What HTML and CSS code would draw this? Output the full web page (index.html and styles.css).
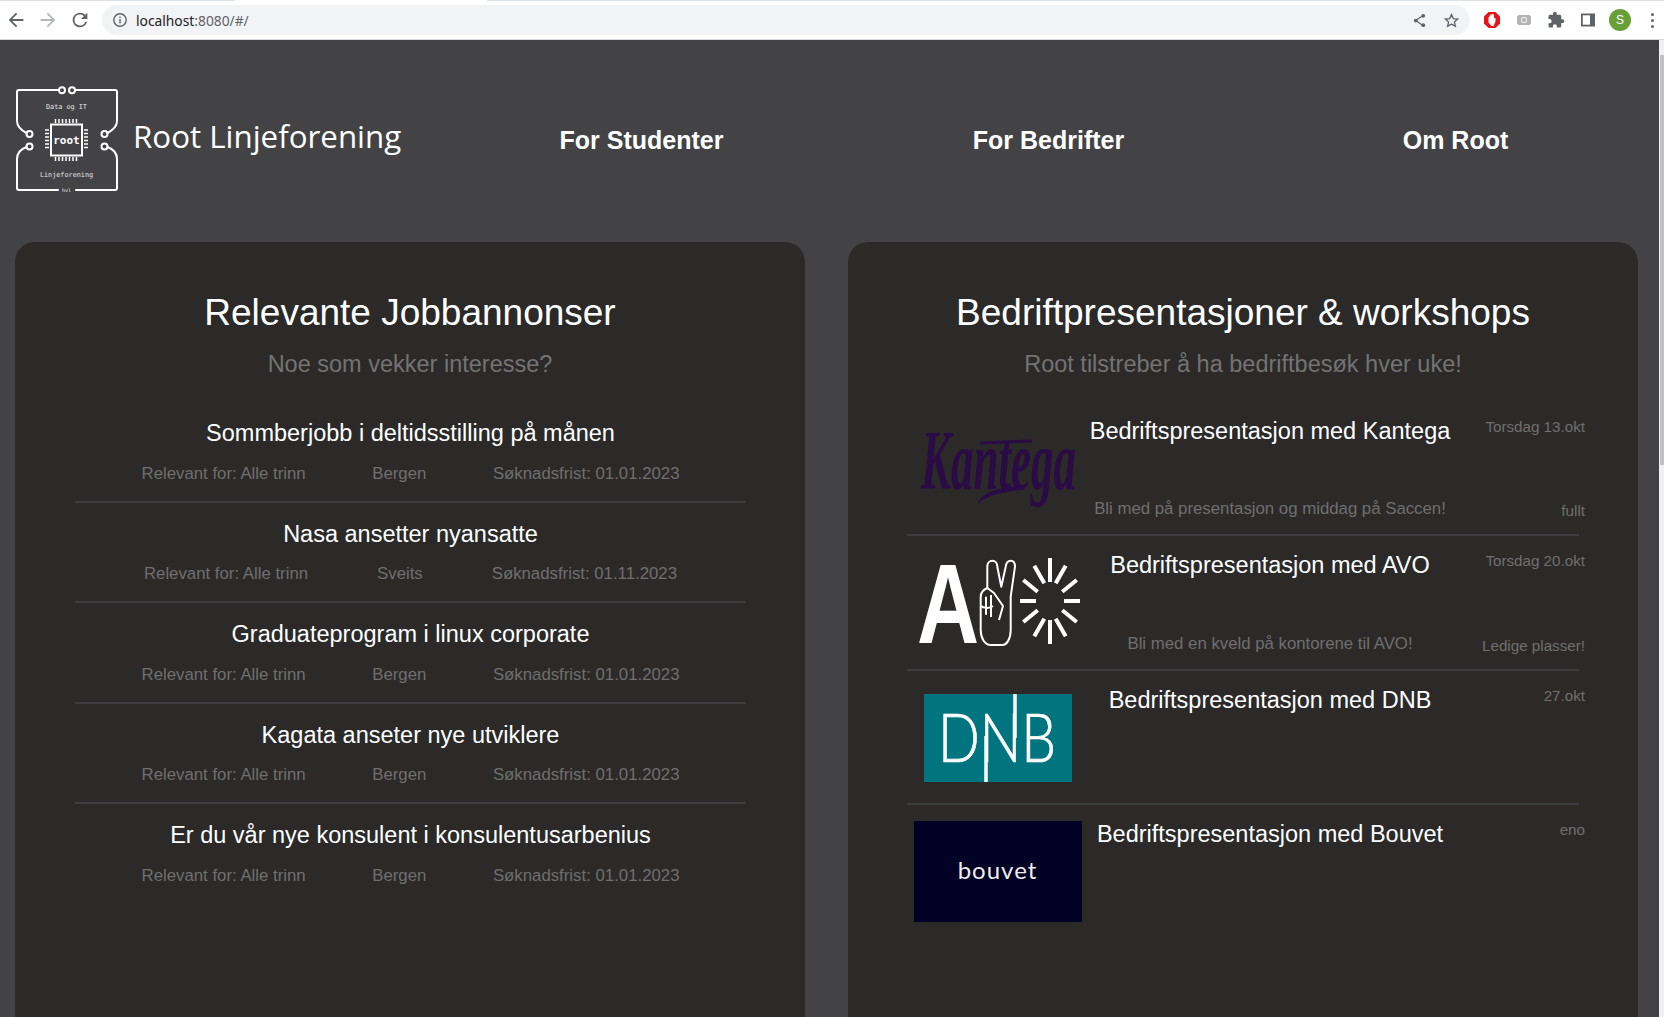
FILE: index.html
```html
<html>
<head>
  <title>Root Linjeforening</title>
  <link rel="stylesheet" href="styles.css">
</head>
<body>
  <div class="browser-bar">
    <div class="tab-strip"><div class="tab-gap"></div></div>
    <div class="toolbar">
      <svg class="tool-icon" viewBox="0 0 24 24"><path d="M20 11H7.8l5.6-5.6L12 4l-8 8 8 8 1.4-1.4L7.8 13H20z" fill="#5f6368"/></svg>
      <svg class="tool-icon" viewBox="0 0 24 24"><path d="M4 11h12.2l-5.6-5.6L12 4l8 8-8 8-1.4-1.4 5.6-5.6H4z" fill="#b4b6b9"/></svg>
      <svg class="tool-icon" viewBox="0 0 24 24"><path d="M17.65 6.35A8 8 0 1 0 19.73 14h-2.08A6 6 0 1 1 12 6c1.66 0 3.14.69 4.22 1.78L13 11h7V4z" fill="#5f6368"/></svg>
      <div class="url-pill">
        <svg class="info-icon" viewBox="0 0 16 16"><circle cx="8" cy="8" r="6.2" fill="none" stroke="#5f6368" stroke-width="1.4"/><rect x="7.3" y="7" width="1.4" height="4.4" fill="#5f6368"/><rect x="7.3" y="4.6" width="1.4" height="1.4" fill="#5f6368"/></svg>
        <span class="url-host">localhost</span><span class="url-rest">:8080/#/</span>
        <svg class="pill-icon share" viewBox="0 0 16 16"><path d="M12 2.5 4 8l8 5.5" fill="none" stroke="#5f6368" stroke-width="1.3"/><circle cx="12" cy="3" r="2" fill="#5f6368"/><circle cx="4" cy="8" r="2" fill="#5f6368"/><circle cx="12" cy="13" r="2" fill="#5f6368"/></svg>
        <svg class="pill-icon" viewBox="0 0 16 16"><path d="M8 1.6l1.9 4.3 4.7.5-3.5 3.1 1 4.6L8 11.8l-4.1 2.3 1-4.6L1.4 6.4l4.7-.5z" fill="none" stroke="#5f6368" stroke-width="1.4"/></svg>
      </div>
      <div class="ext-icons">
        <svg class="ext-icon" viewBox="0 0 18 18"><path d="M5.5 1h7L17 5.5v7L12.500 17h-7L1 12.500v-7z" fill="#e8131b"/><path d="M5.500 9V6h1V4.500h1V3.500h1V3h1.500v.5h1V7h1.500v3.500L10.500 15h-2L5.500 11.500z" fill="#fff"/></svg>
        <svg class="ext-icon" viewBox="0 0 18 18"><rect x="2" y="4" width="14" height="10" rx="2" fill="#b3b3b3"/><circle cx="9" cy="9" r="2.600" fill="none" stroke="#e8e8e8" stroke-width="1.200"/></svg>
        <svg class="ext-icon" viewBox="0 0 24 24"><path d="M20.500 11H19V7a2 2 0 0 0-2-2h-4V3.500a2.500 2.500 0 0 0-5 0V5H4a2 2 0 0 0-2 2v3.800h1.500a2.700 2.700 0 0 1 0 5.400H2V20a2 2 0 0 0 2 2h3.800v-1.500a2.700 2.700 0 0 1 5.400 0V22H17a2 2 0 0 0 2-2v-4h1.500a2.500 2.500 0 0 0 0-5z" fill="#5f6368"/></svg>
        <svg class="ext-icon" viewBox="0 0 18 18"><path d="M2 2.500h14v13H2z" fill="#5f6368"/><rect x="3.800" y="4.300" width="7.200" height="9.400" fill="#fff"/></svg>
        <div class="avatar">S</div>
        <div class="kebab"><i></i><i></i><i></i></div>
      </div>
    </div>
  </div>

  <div class="viewport">
    <div class="page">
      <header class="site-header">
        <div class="brand">
          <svg class="brand-logo" viewBox="0 0 102 102">
            <g fill="none" stroke="#fff" stroke-width="2" stroke-linecap="round">
              <path d="M43 1H3a2 2 0 0 0-2 2v29c0 6 4 9 9.500 12"/>
              <path d="M59 1h40a2 2 0 0 1 2 2v29c0 6-4 9-9.500 12"/>
              <path d="M10.500 58C5 60 1 63 1 70v29a2 2 0 0 0 2 2h39"/>
              <path d="M91.500 58c5.500 2 9.500 5 9.500 12v29a2 2 0 0 1-2 2H60"/>
              <circle cx="46" cy="1.200" r="3"/>
              <circle cx="56" cy="1.200" r="3"/>
              <circle cx="13.500" cy="45" r="3"/>
              <circle cx="88.500" cy="45" r="3"/>
              <circle cx="13.500" cy="57.500" r="3"/>
              <circle cx="88.500" cy="57.500" r="3"/>
              <rect x="35" y="35.500" width="31" height="31"/>
              <path d="M39.500 30v4M43 30v4M46.500 30v4M50 30v4M53.500 30v4M57 30v4M60.500 30v4M39.500 68v4M43 68v4M46.500 68v4M50 68v4M53.500 68v4M57 68v4M60.500 68v4M29 41h4M29 44.500h4M29 48h4M29 51.500h4M29 55h4M29 58.500h4M68 41h4M68 44.500h4M68 48h4M68 51.500h4M68 55h4M68 58.500h4" stroke-width="1.500" stroke-linecap="butt"/>
            </g>
            <text class="logo-chip" x="50.500" y="55" text-anchor="middle">root</text>
            <text class="logo-small" x="50.500" y="20" text-anchor="middle">Data og IT</text>
            <text class="logo-small" x="50.500" y="88" text-anchor="middle">Linjeforening</text>
            <text class="logo-tiny" x="50.500" y="103" text-anchor="middle">hvl</text>
          </svg>
          <span class="brand-name">Root Linjeforening</span>
        </div>
        <nav class="main-nav">
          <a href="#">For Studenter</a>
          <a href="#">For Bedrifter</a>
          <a href="#">Om Root</a>
        </nav>
      </header>

      <main class="panels">
        <section class="panel">
          <h2>Relevante Jobbannonser</h2>
          <p class="panel-sub">Noe som vekker interesse?</p>
          <div class="job-list">
            <div class="job">
              <h3>Sommberjobb i deltidsstilling på månen</h3>
              <div class="job-meta"><span>Relevant for: Alle trinn</span><span>Bergen</span><span>Søknadsfrist: 01.01.2023</span></div>
            </div>
            <div class="job">
              <h3>Nasa ansetter nyansatte</h3>
              <div class="job-meta"><span>Relevant for: Alle trinn</span><span>Sveits</span><span>Søknadsfrist: 01.11.2023</span></div>
            </div>
            <div class="job">
              <h3>Graduateprogram i linux corporate</h3>
              <div class="job-meta"><span>Relevant for: Alle trinn</span><span>Bergen</span><span>Søknadsfrist: 01.01.2023</span></div>
            </div>
            <div class="job">
              <h3>Kagata anseter nye utviklere</h3>
              <div class="job-meta"><span>Relevant for: Alle trinn</span><span>Bergen</span><span>Søknadsfrist: 01.01.2023</span></div>
            </div>
            <div class="job">
              <h3>Er du vår nye konsulent i konsulentusarbenius</h3>
              <div class="job-meta"><span>Relevant for: Alle trinn</span><span>Bergen</span><span>Søknadsfrist: 01.01.2023</span></div>
            </div>
          </div>
        </section>

        <section class="panel">
          <h2>Bedriftpresentasjoner &amp; workshops</h2>
          <p class="panel-sub">Root tilstreber å ha bedriftbesøk hver uke!</p>
          <div class="event-list">
            <div class="event">
              <div class="event-logo">
                <svg class="logo-kantega" viewBox="0 0 156 74">
                  <text x="1" y="30.700" transform="scale(1 1.888)">Kantega</text>
                  <path d="M58 72C62 60 85 55 106 55l-2 4C88 60 70 63 58 72z" fill="#2a0b45"/>
                  <path d="M60 12l52-2" stroke="#2a0b45" stroke-width="3"/>
                </svg>
              </div>
              <div class="event-main">
                <h3>Bedriftspresentasjon med Kantega</h3>
                <p>Bli med på presentasjon og middag på Saccen!</p>
              </div>
              <div class="event-side"><span>Torsdag 13.okt</span><span>fullt</span></div>
            </div>
            <div class="event">
              <div class="event-logo">
                <svg class="logo-avo" viewBox="0 0 166 90">
                  <text class="avo-a" x="2" y="65.900" transform="scale(1 1.320)">A</text>
                  <g fill="none" stroke="#fff" stroke-width="2" stroke-linejoin="round">
                    <path d="M72.300 32V10.700c0-8 10-8 10 0l4 20 4.400-20c1-8 9.300-8 9.300 0l-4.300 30V74c0 9-4 15-8.400 15H75.700c-6 0-10-7-10-15V40.700c0-4 3-7 6.600-8.700z"/>
                    <path d="M71 40.700v18M76 39v22M72.300 32 79 37l9 13-4 14M66 50c2 2 8 3 12 0"/>
                  </g>
                  <g stroke="#fff" stroke-width="4">
                    <path d="M135 2v24M135 64v24M105 45h16M149 45h16"/>
                    <path d="M119.300 9.700l10 17.600M140.700 62.700l10 17.600M150.700 9.700l-10 17.600M129.300 62.700l-10 17.600"/>
                    <path d="M108.300 24l14.400 11.700M147.300 54.300 161.700 66M161.700 24l-14.400 11.700M122.700 54.300 108.300 66"/>
                  </g>
                </svg>
              </div>
              <div class="event-main">
                <h3>Bedriftspresentasjon med AVO</h3>
                <p>Bli med en kveld på kontorene til AVO!</p>
              </div>
              <div class="event-side"><span>Torsdag 20.okt</span><span>Ledige plasser!</span></div>
            </div>
            <div class="event">
              <div class="event-logo">
                <svg class="logo-dnb" viewBox="0 0 148 88">
                  <rect width="148" height="88" fill="#00747f"/>
                  <text x="14" y="55" transform="scale(1 1.236)">DNB</text>
                  <path d="M62 88V42M91 0v44" stroke="#fff" stroke-width="3.500"/>
                </svg>
              </div>
              <div class="event-main">
                <h3>Bedriftspresentasjon med DNB</h3>
              </div>
              <div class="event-side"><span>27.okt</span></div>
            </div>
            <div class="event">
              <div class="event-logo">
                <div class="logo-bouvet">bouvet</div>
              </div>
              <div class="event-main">
                <h3>Bedriftspresentasjon med Bouvet</h3>
              </div>
              <div class="event-side"><span>eno</span></div>
            </div>
          </div>
        </section>
      </main>
    </div>
    <div class="scrollbar"><div class="scroll-thumb"></div></div>
  </div>
</body>
</html>
```

FILE: styles.css
```css
html, body {
  margin: 0;
  padding: 0;
  height: 1017px;
  overflow: hidden;
}

body {
  font-family: "Liberation Sans", Arial, sans-serif;
  background-color: #434345;
  color: #ffffff;
}

/* Browser chrome */
.browser-bar {
  height: 40px;
  background: #ffffff;
  border-bottom: 1px solid #d5d6d8;
  box-sizing: border-box;
}

.tab-strip {
  height: 1px;
  background: #dee1e6;
  padding-left: 235px;
}

.tab-gap {
  width: 252px;
  height: 1px;
  background: #ffffff;
}

.toolbar {
  height: 38px;
  display: flex;
  align-items: center;
  padding-left: 5px;
}

.tool-icon {
  width: 22px;
  height: 22px;
  margin-right: 10px;
}

.url-pill {
  width: 1368px;
  height: 30px;
  margin-left: 1px;
  background: #f1f3f4;
  border-radius: 15px;
  display: flex;
  align-items: center;
  font-family: "Noto Sans", sans-serif;
  font-size: 13.8px;
  box-sizing: border-box;
  padding-left: 10px;
  padding-right: 11px;
}

.info-icon {
  width: 16px;
  height: 16px;
  margin-right: 8px;
}

.url-host {
  color: #202124;
}

.url-rest {
  color: #5f6368;
  flex: 1;
}

.pill-icon {
  width: 15px;
  height: 15px;
  margin-left: 17px;
}

.ext-icons {
  display: flex;
  align-items: center;
  margin-left: 13px;
}

.ext-icon {
  width: 18px;
  height: 18px;
  margin-right: 14px;
}

.avatar {
  width: 22px;
  height: 22px;
  border-radius: 50%;
  background: #689f38;
  color: #ffffff;
  font-size: 12px;
  line-height: 22px;
  text-align: center;
  margin-left: -2px;
}

.kebab {
  display: flex;
  flex-direction: column;
  gap: 3px;
  margin-left: 20px;
}

.kebab i {
  width: 3px;
  height: 3px;
  border-radius: 50%;
  background: #5f6368;
}

/* Page */
.viewport {
  display: flex;
  height: 977px;
  overflow: hidden;
}

.page {
  flex: 1;
  min-width: 0;
}

.scrollbar {
  width: 5px;
  background: #f1f1f1;
  padding-top: 15px;
  box-sizing: border-box;
}

.scroll-thumb {
  height: 410px;
  margin-left: 1px;
  background: #c1c1c1;
}

.site-header {
  height: 202px;
  display: flex;
  align-items: center;
}

.brand {
  width: 438px;
  flex: none;
  display: flex;
  align-items: center;
  padding-left: 16px;
  padding-bottom: 2px;
  box-sizing: border-box;
}

.brand-logo {
  width: 102px;
  height: 102px;
  overflow: visible;
}

.logo-chip {
  font-family: "DejaVu Sans Mono", monospace;
  font-size: 11px;
  font-weight: bold;
  fill: #ffffff;
}

.logo-small {
  font-family: "DejaVu Sans Mono", monospace;
  font-size: 6.800px;
  fill: #e6e6e6;
}

.logo-tiny {
  font-family: "DejaVu Sans Mono", monospace;
  font-size: 5px;
  fill: #e6e6e6;
}

.brand-name {
  font-family: "Open Sans", sans-serif;
  font-weight: 400;
  font-size: 31.300px;
  margin-left: 15px;
  margin-bottom: 9px;
  white-space: nowrap;
}

.main-nav {
  flex: 1;
  display: grid;
  grid-template-columns: repeat(3, 1fr);
  text-align: center;
  margin-bottom: 2px;
}

.main-nav a {
  color: #ffffff;
  font-size: 25px;
  font-weight: bold;
  text-decoration: none;
}

.panels {
  display: flex;
  gap: 43px;
  padding-left: 15px;
}

.panel {
  width: 790px;
  height: 800px;
  background: #2b2a29;
  border-radius: 20px;
  padding-top: 51px;
  box-sizing: border-box;
}

h2 {
  margin: 0;
  font-size: 37px;
  font-weight: normal;
  line-height: 40px;
  text-align: center;
}

.panel-sub {
  margin: 17px 0 24px;
  color: #737373;
  font-size: 23.500px;
  line-height: 28px;
  text-align: center;
}

/* Jobs */
.job-list {
  margin: 0 59px 0 60px;
}

.job {
  padding: 17px 0 17px;
  border-bottom: 2px solid #3e3e40;
  text-align: center;
}

.job:last-child {
  border-bottom: none;
}

.job h3 {
  margin: 0;
  font-size: 23.500px;
  font-weight: normal;
  line-height: 28px;
}

.job-meta {
  margin-top: 16.500px;
  display: flex;
  justify-content: space-evenly;
  color: #6f6f6f;
  font-size: 16.800px;
  line-height: 20px;
}

/* Events */
.event-list {
  margin: 0 59px 0 59px;
}

.event {
  height: 134.400px;
  box-sizing: border-box;
  display: grid;
  grid-template-columns: 183px 360px 135px;
  border-bottom: 2px solid #3e3e40;
}

.event:last-child {
  border-bottom: none;
}

.event-logo {
  display: flex;
  align-items: center;
  justify-content: center;
  padding-right: 2px;
}

.event-main {
  padding: 15px 0 11px;
  display: flex;
  flex-direction: column;
  justify-content: space-between;
  align-items: center;
  text-align: center;
  white-space: nowrap;
}

.event-main h3 {
  margin: 0;
  font-size: 23.500px;
  font-weight: normal;
  line-height: 28px;
}

.event-main p {
  margin: 0;
  color: #6f6f6f;
  font-size: 16.800px;
  line-height: 28px;
}

.event-side {
  padding: 16px 0 14px;
  display: flex;
  flex-direction: column;
  justify-content: space-between;
  align-items: flex-end;
  color: #6f6f6f;
  font-size: 15.200px;
  line-height: 18px;
}

.logo-kantega {
  width: 156px;
  height: 74px;
  overflow: visible;
}

.logo-kantega text {
  font-family: "Liberation Serif", serif;
  font-style: italic;
  font-weight: bold;
  font-size: 45px;
  fill: #2a0b45;
}

.logo-avo {
  width: 166px;
  height: 90px;
  margin-bottom: 3px;
  overflow: visible;
}

.avo-a {
  font-family: "Liberation Sans", sans-serif;
  font-weight: bold;
  font-size: 86px;
  fill: #ffffff;
}

.logo-dnb {
  width: 148px;
  height: 88px;
  margin-top: 2px;
  overflow: visible;
}

.logo-dnb text {
  font-family: "Lato", sans-serif;
  font-weight: 300;
  font-size: 55px;
  fill: #ffffff;
  stroke: #ffffff;
  stroke-width: 0.600px;
}

.logo-bouvet {
  width: 168px;
  height: 101px;
  margin-bottom: 2px;
  background: #020024;
  color: #eeeeee;
  font-family: "Lato", sans-serif;
  font-size: 24px;
  line-height: 97px;
  text-align: center;
  letter-spacing: 1px;
}
```
